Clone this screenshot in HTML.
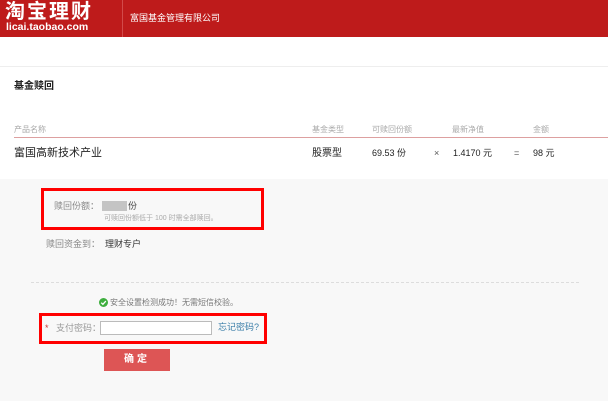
<!DOCTYPE html>
<html><head><meta charset="utf-8"><style>
*{margin:0;padding:0;box-sizing:border-box}
body{width:608px;height:401px;overflow:hidden;background:#fff;font-family:"Liberation Sans","Noto Sans CJK SC",sans-serif;position:relative;color:#333}
.a{position:absolute;white-space:nowrap}
.hd{position:absolute;left:0;top:0;width:608px;height:37px;background:#be1b1b}
.grey{position:absolute;left:0;top:179px;width:608px;height:222px;background:#f8f8f8}
.box{position:absolute;border:3px solid #f00}
</style></head><body>
<div class="hd"></div>
<div class="a" style="left:5px;top:1px;font-size:20px;font-weight:bold;color:#fff;letter-spacing:2px;line-height:23px">淘宝理财</div>
<div class="a" style="left:6px;top:22px;font-size:10.5px;font-weight:bold;color:#fff;line-height:11px">licai.taobao.com</div>
<div class="a" style="left:122px;top:0;width:1px;height:37px;background:#d24a4a"></div>
<div class="a" style="left:130px;top:12px;font-size:9px;color:#fff;line-height:12px">富国基金管理有限公司</div>
<div class="a" style="left:0;top:66px;width:608px;height:1px;background:#eee"></div>
<div class="a" style="left:14px;top:80px;font-size:10px;font-weight:bold;color:#222;line-height:13px">基金赎回</div>
<div class="a" style="left:14px;top:124px;font-size:8px;color:#aaa;line-height:11px">产品名称</div>
<div class="a" style="left:312px;top:124px;font-size:8px;color:#aaa;line-height:11px">基金类型</div>
<div class="a" style="left:372px;top:124px;font-size:8px;color:#aaa;line-height:11px">可赎回份额</div>
<div class="a" style="left:452px;top:124px;font-size:8px;color:#aaa;line-height:11px">最新净值</div>
<div class="a" style="left:533px;top:124px;font-size:8px;color:#aaa;line-height:11px">金额</div>
<div class="a" style="left:14px;top:137px;width:594px;height:1px;background:#dda0a0"></div>
<div class="a" style="left:14px;top:146px;font-size:11px;color:#222;line-height:14px">富国高新技术产业</div>
<div class="a" style="left:312px;top:147px;font-size:10px;color:#222;line-height:13px">股票型</div>
<div class="a" style="left:372px;top:147px;font-size:9px;color:#222;line-height:13px">69.53 份</div>
<div class="a" style="left:434px;top:147px;font-size:9px;color:#555;line-height:13px">×</div>
<div class="a" style="left:453px;top:147px;font-size:9px;color:#222;line-height:13px">1.4170 元</div>
<div class="a" style="left:514px;top:147px;font-size:9px;color:#555;line-height:13px">=</div>
<div class="a" style="left:533px;top:147px;font-size:9px;color:#222;line-height:13px">98 元</div>
<div class="grey"></div>
<div class="box" style="left:41px;top:188px;width:223px;height:42px"></div>
<div class="a" style="left:54px;top:200px;font-size:9px;color:#888;line-height:12px">赎回份额：</div>
<div class="a" style="left:102px;top:201px;width:25px;height:10px;background:#c4c4c4"></div>
<div class="a" style="left:128px;top:200px;font-size:9px;color:#444;line-height:12px">份</div>
<div class="a" style="left:104px;top:214px;font-size:7px;color:#aaa;line-height:10px">可赎回份额低于 100 时需全部赎回。</div>
<div class="a" style="left:46px;top:238px;font-size:9px;color:#888;line-height:12px">赎回资金到：</div>
<div class="a" style="left:105px;top:238px;font-size:9px;color:#333;line-height:12px">理财专户</div>
<div class="a" style="left:31px;top:282px;width:548px;border-top:1px dashed #ddd"></div>
<svg class="a" style="left:99px;top:298px" width="9" height="9" viewBox="0 0 10 10"><circle cx="5" cy="5" r="5" fill="#3eae3e"/><path d="M2.5 5.2 4.3 7 7.6 3.4" stroke="#fff" stroke-width="1.5" fill="none"/></svg>
<div class="a" style="left:110px;top:297px;font-size:8px;color:#777;line-height:11px">安全设置检测成功！无需短信校验。</div>
<div class="box" style="left:39px;top:313px;width:228px;height:31px"></div>
<div class="a" style="left:45px;top:322px;font-size:9px;color:#c33;line-height:12px">*</div>
<div class="a" style="left:56px;top:322px;font-size:9px;color:#999;line-height:12px">支付密码：</div>
<div class="a" style="left:100px;top:321px;width:112px;height:14px;background:#fff;border:1px solid #bbb"></div>
<div class="a" style="left:218px;top:321px;font-size:9px;color:#3a7ea8;line-height:12px">忘记密码?</div>
<div class="a" style="left:104px;top:349px;width:66px;height:22px;background:#dd5555;color:#fff;font-size:10px;font-weight:bold;text-align:center;line-height:22px;letter-spacing:3px">确定</div>
</body></html>
